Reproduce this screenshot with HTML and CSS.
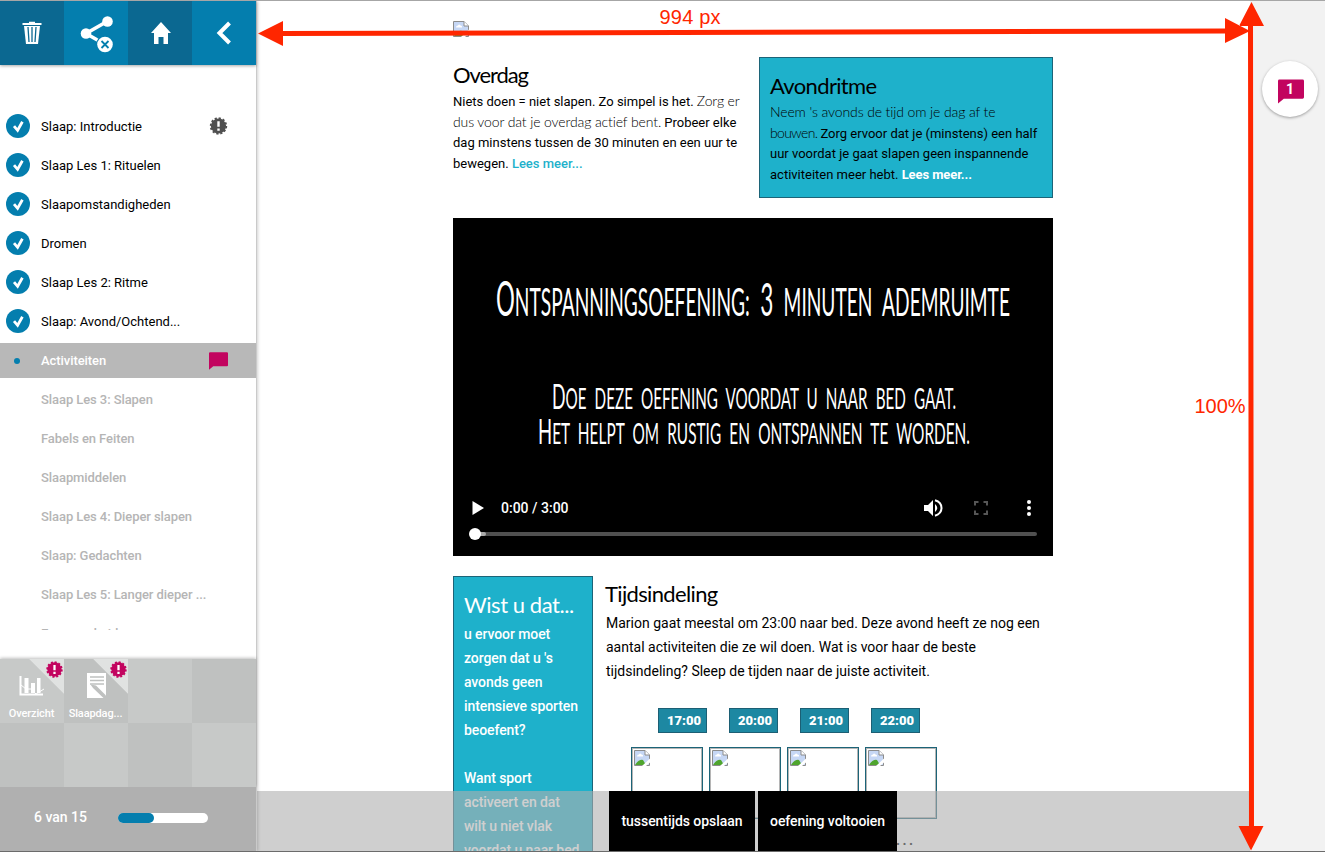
FILE: index.html
```html
<!DOCTYPE html>
<html lang="nl">
<head>
<meta charset="utf-8">
<title>Activiteiten</title>
<link rel="stylesheet" href="styles.css">
</head>
<body>
<svg class="defs" width="0" height="0">
  <symbol id="check" viewBox="0 0 24 24"><circle cx="12" cy="12" r="12" fill="#047eae"/><path d="M8 12.200l3.600 4.200 4.800-8.600" fill="none" stroke="#fff" stroke-width="2.800"/></symbol>
  <symbol id="alert" viewBox="0 0 18 18"><circle cx="9" cy="9" r="7.600" fill="currentColor"/><circle cx="9" cy="9" r="7.800" fill="none" stroke="currentColor" stroke-width="1.800" stroke-dasharray="2.200 1.880"/><path d="M9 4.200v5.600M9 11.400v2.400" stroke="#fff" stroke-width="2.400"/></symbol>
  <symbol id="bubble" viewBox="0 0 27 25"><path d="M1.500 0H25.500Q27 0 27 1.500V18.500Q27 20 25.500 20H6L0 25V1.500Q0 0 1.500 0Z" fill="#c2045f"/></symbol>
  <symbol id="broken" viewBox="0 0 16 16"><path d="M.5.5h10.500l4.500 4.500v10.500H.5z" fill="#c6d7f5" stroke="#8c8c8c"/><path d="M11 .5V5h4.500" fill="#fff" stroke="#8c8c8c"/><path d="M3 6.500q0-2 2-2 1-1.800 2.500 0 2 0 1.500 2z" fill="#fff"/><path d="M1 15q4-6 8-5l3 5z" fill="#4fa52e"/><path d="M8 16l8-7.500v4L12 16z" fill="#fff"/></symbol>
</svg>
<div class="app">
  <aside class="sidebar">
    <nav class="tools">
      <a class="tool dark"><svg width="20" height="24" viewBox="0 0 20 24"><path d="M.5 3h19M7 1.800h6" stroke="#fff" stroke-width="2"/><path d="M2 5h16l-2 18H4z" fill="#fff"/><path d="M6 6l1 15M10 6v15M14 6l-1 15" stroke="#0b6891" stroke-width="1.300"/></svg></a>
      <a class="tool share"><svg width="34" height="38" viewBox="0 0 34 38"><path d="M27 6.500L6 18.500l14 8" fill="none" stroke="#fff" stroke-width="3.600"/><circle cx="27.500" cy="6.500" r="5.300" fill="#fff"/><circle cx="6" cy="18.500" r="5.300" fill="#fff"/><circle cx="25" cy="29.500" r="9" fill="#047eae"/><circle cx="25" cy="29.500" r="7.800" fill="#fff"/><path d="M21.500 26l7 7M28.500 26l-7 7" stroke="#047eae" stroke-width="1.800"/></svg></a>
      <a class="tool dark home"><svg width="20" height="22" viewBox="0 0 20 22"><path d="M10 0l10 11h-3v11h-4.500v-7h-5v7H3V11H0z" fill="#fff"/></svg></a>
      <a class="tool"><svg width="16" height="24" viewBox="0 0 16 24"><path d="M13.500 2L3.500 12l10 10" fill="none" stroke="#fff" stroke-width="4"/></svg></a>
    </nav>
    <ul class="lessons">
      <li><svg class="mark"><use href="#check"/></svg>Slaap: Introductie<svg class="note"><use href="#alert"/></svg></li>
      <li><svg class="mark"><use href="#check"/></svg>Slaap Les 1: Rituelen</li>
      <li><svg class="mark"><use href="#check"/></svg>Slaapomstandigheden</li>
      <li><svg class="mark"><use href="#check"/></svg>Dromen</li>
      <li><svg class="mark"><use href="#check"/></svg>Slaap Les 2: Ritme</li>
      <li><svg class="mark"><use href="#check"/></svg>Slaap: Avond/Ochtend...</li>
      <li class="current"><span class="mark dot"></span>Activiteiten<svg class="note"><use href="#bubble"/></svg></li>
      <li class="off">Slaap Les 3: Slapen</li>
      <li class="off">Fabels en Feiten</li>
      <li class="off">Slaapmiddelen</li>
      <li class="off">Slaap Les 4: Dieper slapen</li>
      <li class="off">Slaap: Gedachten</li>
      <li class="off">Slaap Les 5: Langer dieper ...</li>
      <li class="off">Eenzaamheid</li>
    </ul>
    <div class="tiles">
      <div class="tile corner"><svg class="badge"><use href="#alert"/></svg><svg class="glyph" viewBox="0 0 26 26"><path d="M1.500 3v18.500H24" fill="none" stroke="#fff" stroke-width="2"/><path d="M5.500 5h4v15h-4zM12 10h4v10h-4zM18 5h3.500v15H18z" fill="#fff"/><path d="M2 12l5 4 5 0 5 5 8-5" fill="none" stroke="#fff"/></svg>Overzicht</div>
      <div class="tile alt corner"><svg class="badge"><use href="#alert"/></svg><svg class="glyph" viewBox="0 0 26 26"><path d="M4 0h19v25H4z" fill="#fff"/><path d="M7 4h14M7 7.500h14M7 11h14" stroke="#bfc1c0" stroke-width="1.300"/><path d="M7.500 11.500l5.500 1 10 10v3h-2L10 15z" fill="#bfc1c0"/></svg>Slaapdag...</div>
      <div class="tile"></div><div class="tile alt"></div>
      <div class="tile alt"></div><div class="tile"></div><div class="tile alt"></div><div class="tile"></div>
    </div>
    <div class="progress"><span>6 van 15</span><div class="track"><div class="fill" style="width:40%"></div></div></div>
  </aside>
  <main class="page">
    <div class="content">
      <svg class="pic"><use href="#broken"/></svg>
      <div class="intro">
        <section class="day">
          <h2 class="tight">Overdag</h2>
          <p>Niets doen = niet slapen. Zo simpel is het. <span class="hand">Zorg er<br>dus voor dat je overdag actief bent.</span> Probeer elke<br>dag minstens tussen de 30 minuten en een uur te<br>bewegen. <a>Lees meer...</a></p>
        </section>
        <section class="evening">
          <h2>Avondritme</h2>
          <p><span class="hand">Neem 's avonds de tijd om je dag af te<br><span class="narrow">bouwen.</span></span> Zorg ervoor dat je (minstens) een half<br>uur voordat je gaat slapen geen inspannende<br>activiteiten meer hebt. <a>Lees meer...</a></p>
        </section>
      </div>
      <div class="video">
        <svg class="caption" viewBox="0 0 600 240" width="600" height="240">
          <text x="43" y="98" textLength="514" lengthAdjust="spacingAndGlyphs" font-size="39" word-spacing="11"><tspan font-size="48">O</tspan>NTSPANNINGSOEFENING: <tspan font-size="46">3</tspan> MINUTEN ADEMRUIMTE</text>
          <text x="99" y="191" textLength="404" lengthAdjust="spacingAndGlyphs" font-size="29" word-spacing="8"><tspan font-size="34">D</tspan>OE DEZE OEFENING VOORDAT U NAAR BED GAAT.</text>
          <text x="85" y="226" textLength="432" lengthAdjust="spacingAndGlyphs" font-size="29" word-spacing="8"><tspan font-size="35">H</tspan>ET HELPT OM RUSTIG EN ONTSPANNEN TE WORDEN.</text>
        </svg>
        <div class="controls">
          <svg width="12" height="14" viewBox="0 0 12 14"><path d="M.5 0L12 7 .5 14z" fill="#fff"/></svg>
          <span class="time">0:00 / 3:00</span>
          <svg class="sound" width="20" height="18" viewBox="0 0 20 18"><path d="M1 6h4l5-5v16l-5-5H1z" fill="#fff"/><path d="M12 5q4.500 4 0 8z" fill="#fff"/><path d="M12 1.300q6.500 2 6.500 7.700T12 16.700" fill="none" stroke="#fff" stroke-width="2"/></svg>
          <svg class="full" width="14" height="14" viewBox="0 0 14 14"><path d="M1 4.500V1h3.500M9.500 1H13v3.500M13 9.500V13H9.500M4.500 13H1V9.500" fill="none" stroke="#565656" stroke-width="2"/></svg>
          <svg width="4" height="18" viewBox="0 0 4 18"><g fill="#fff"><circle cx="2" cy="3" r="2"/><circle cx="2" cy="9" r="2"/><circle cx="2" cy="15" r="2"/></g></svg>
        </div>
        <div class="seek"><div class="buffer"></div><div class="thumb"></div></div>
      </div>
      <div class="exercise">
        <aside class="fact">
          <h2>Wist u dat...</h2>
          <p>u ervoor moet<br>zorgen dat u 's<br>avonds geen<br>intensieve sporten<br>beoefent?</p>
          <p>Want sport<br>activeert en dat<br>wilt u niet vlak<br>voordat u naar bed</p>
        </aside>
        <section class="schedule">
          <h2>Tijdsindeling</h2>
          <p>Marion gaat meestal om 23:00 naar bed. Deze avond heeft ze nog een<br>aantal activiteiten die ze wil doen. Wat is voor haar de beste<br>tijdsindeling? Sleep de tijden naar de juiste activiteit.</p>
          <div class="times"><span>17:00</span><span>20:00</span><span>21:00</span><span>22:00</span></div>
          <div class="slots">
            <div><svg class="pic"><use href="#broken"/></svg></div>
            <div><svg class="pic"><use href="#broken"/></svg></div>
            <div><svg class="pic"><use href="#broken"/></svg></div>
            <div><svg class="pic"><use href="#broken"/></svg></div>
          </div>
          <div class="dots">...</div>
        </section>
      </div>
    </div>
    <div class="actions"><button>tussentijds opslaan</button><button class="finish">oefening voltooien</button></div>
  </main>
  <aside class="chat"><div class="chat-button"><svg><use href="#bubble"/></svg><span>1</span></div></aside>
  <svg class="measure" width="1325" height="852" viewBox="0 0 1325 852">
    <path d="M280 33.500L1226 31M1250.500 24L1251.500 828" stroke="#ff2600" stroke-width="5"/>
    <path d="M258 33.500l25-12.500v25zM1250 31l-25-13v25zM1251.500 2l12.500 24h-25zM1251 850.500l-12.500-24.500h25z" fill="#ff2600"/>
    <text x="659.500" y="24" textLength="61">994 px</text>
    <text x="1194.500" y="413" textLength="51">100%</text>
  </svg>
</div>
</body>
</html>
```
FILE: styles.css
```css
* { box-sizing: border-box; }
body { margin: 0; font: 13px Roboto, sans-serif; color: #000; background: #fff; }
h2, p, ul { margin: 0; padding: 0; }
svg { display: block; flex: none; }
.defs { position: absolute; }
.app { position: relative; display: flex; width: 1325px; height: 852px; overflow: hidden; border-top: 1px solid #a6a6a6; border-bottom: 1px solid #6b6b6b; }

.sidebar { position: relative; z-index: 2; width: 257px; flex: none; display: flex; flex-direction: column; border-right: 1px solid #cacaca; box-shadow: 1px 0 3px rgba(0,0,0,.18); background: #fff; }
.tools { display: flex; height: 64px; flex: none; box-shadow: 0 1px 3px rgba(0,0,0,.35); }
.tool { width: 64px; display: flex; align-items: center; justify-content: center; background: #047eae; }
.tool.dark { background: #0b6891; }
.tool.share { padding: 2px 0 0 2px; }
.tool.home { padding-left: 2px; }
.lessons { list-style: none; height: 521px; margin-top: 44px; flex: none; overflow: hidden; display: flex; flex-direction: column; gap: 4px; }
.lessons li { position: relative; height: 35px; flex: none; padding-left: 41px; line-height: 35px; white-space: nowrap; }
.mark { position: absolute; left: 6px; top: 5px; width: 24px; height: 24px; }
.note { position: absolute; left: 209px; top: 8px; width: 19px; height: 18px; color: #505050; }
.current .note { top: 9px; }
.current { background: #b8b8b8; color: #fff; font-weight: 500; letter-spacing: -.07px; }
.mark.dot { left: 14px; top: 15px; width: 6px; height: 6px; border-radius: 50%; background: #047eae; }
.off { color: #b5b5b5; font-weight: 500; letter-spacing: -.08px; }
.tiles { display: grid; grid-template-columns: repeat(4, 64px); grid-auto-rows: 64px; margin-top: auto; box-shadow: 0 -1px 3px rgba(0,0,0,.25); }
.tile { position: relative; background: #c7c9c8; color: #fff; font-size: 11px; font-weight: 500; letter-spacing: -.12px; text-align: center; padding: 14px 1px 0 0; line-height: 14px; }
.tile.alt { background: #bfc1c0; }
.tile.corner { background-image: linear-gradient(45deg, transparent 72.5%, #e0e2e1 73%); }
.badge { position: absolute; right: 1px; top: 2px; width: 17px; height: 17px; color: #c2045f; }
.glyph { width: 26px; height: 26px; margin: 0 auto 8px; }
.progress { height: 64px; flex: none; padding: 0 0 4px 34px; display: flex; align-items: center; background: #b0b0b0; color: #fff; font-size: 14px; font-weight: 500; }
.track { width: 90px; height: 10px; margin: 1px 0 0 31px; border-radius: 5px; background: #fff; }
.fill { height: 10px; border-radius: 5px; background: #047eae; }

.page { position: relative; width: 993px; flex: none; overflow: hidden; padding: 20px 0 0 196px; }
.content { width: 600px; }
.pic { width: 16px; height: 16px; }
.content h2 { font: 400 22px/24px Lato, sans-serif; letter-spacing: -.65px; margin-bottom: 5px; white-space: nowrap; }
.content h2.tight { letter-spacing: -1.1px; }
.intro { display: flex; justify-content: space-between; height: 141px; margin-top: 20px; line-height: 20.6px; white-space: nowrap; }
.day { padding-top: 6px; }
.day a { color: #1eb1cb; font-weight: 500; }
.hand { font: 300 14px/1 Lato, sans-serif; letter-spacing: -.12px; }
.narrow { letter-spacing: -.7px; }
.evening { width: 294px; padding: 16px 10px 0; background: #1eb1cb; border: 1px solid #1c6478; }
.evening a { color: #fff; font-weight: 700; letter-spacing: -.1px; }
.video { height: 338px; margin-top: 20px; background: #000; color: #fff; display: flex; flex-direction: column; }
.caption { font-family: Lato, sans-serif; fill: #fff; }
.controls { display: flex; align-items: center; height: 30px; margin-top: 35px; padding: 0 22px 0 19px; font-size: 14px; font-weight: 500; }
.time { margin-left: 17px; }
.sound { margin-left: auto; }
.full { margin: 0 39px 0 31px; }
.seek { position: relative; height: 4px; margin: 9px 16px 0 22px; border-radius: 2px; background: #505050; }
.buffer { width: 11px; height: 4px; background: #aaa; border-radius: 2px; }
.thumb { position: absolute; left: -6px; top: -4px; width: 12px; height: 12px; border-radius: 50%; background: #fff; }
.exercise { display: flex; margin-top: 20px; font-size: 14px; line-height: 24px; white-space: nowrap; }
.fact { width: 140px; height: 300px; padding: 14px 10px 0; background: #1eb1cb; border: 1px solid #1c6478; color: #fff; font-weight: 500; letter-spacing: -.09px; overflow: hidden; }
.fact h2 { line-height: 27px; margin-bottom: 4px; letter-spacing: -.45px; }
.fact p + p { margin-top: 24px; }
.schedule { padding: 4px 0 0 13px; }
.schedule h2 { line-height: 27px; margin: 0 0 4px -1px; }
.times { display: flex; gap: 22px; margin: 25px 0 0 52px; }
.times span { width: 49px; height: 25px; padding-left: 3px; border: 1px solid #1c5f74; background: #1d88a2; color: #fff; font-size: 13px; font-weight: 900; line-height: 23px; text-align: center; }
.slots { display: flex; gap: 6px; margin: 14px 0 0 25px; }
.slots div { width: 72px; height: 72px; padding: 2px; border: 1px solid #1c6478; box-shadow: inset 0 0 0 1px #b5b5b5; }
.dots { margin: 9px 0 0 290px; line-height: 24px; letter-spacing: 2.5px; font-weight: 700; }
.actions { position: absolute; left: 0; right: 0; bottom: 0; height: 60px; display: flex; gap: 3px; padding-left: 352px; background: rgba(175,175,175,.6); }
.actions button { width: 146px; border: 0; padding: 0; background: #000; color: #fff; font: 500 14px Roboto, sans-serif; letter-spacing: -.05px; }
.actions .finish { width: 139px; }

.chat { flex: 1; padding: 60px 0 0 12px; background: #f2f2f2; }
.chat-button { position: relative; width: 56px; height: 56px; padding: 18px 0 0 16px; border-radius: 50%; background: #fff; box-shadow: 0 1px 3px rgba(0,0,0,.35); }
.chat-button svg { width: 26px; height: 25px; }
.chat-button span { position: absolute; left: 16px; top: 18px; width: 24px; line-height: 20px; text-align: center; color: #fff; font-size: 14px; font-weight: 700; }
.measure { position: absolute; left: 0; top: -1px; z-index: 5; font: 20px "Liberation Sans", sans-serif; fill: #ff2600; pointer-events: none; }
```
